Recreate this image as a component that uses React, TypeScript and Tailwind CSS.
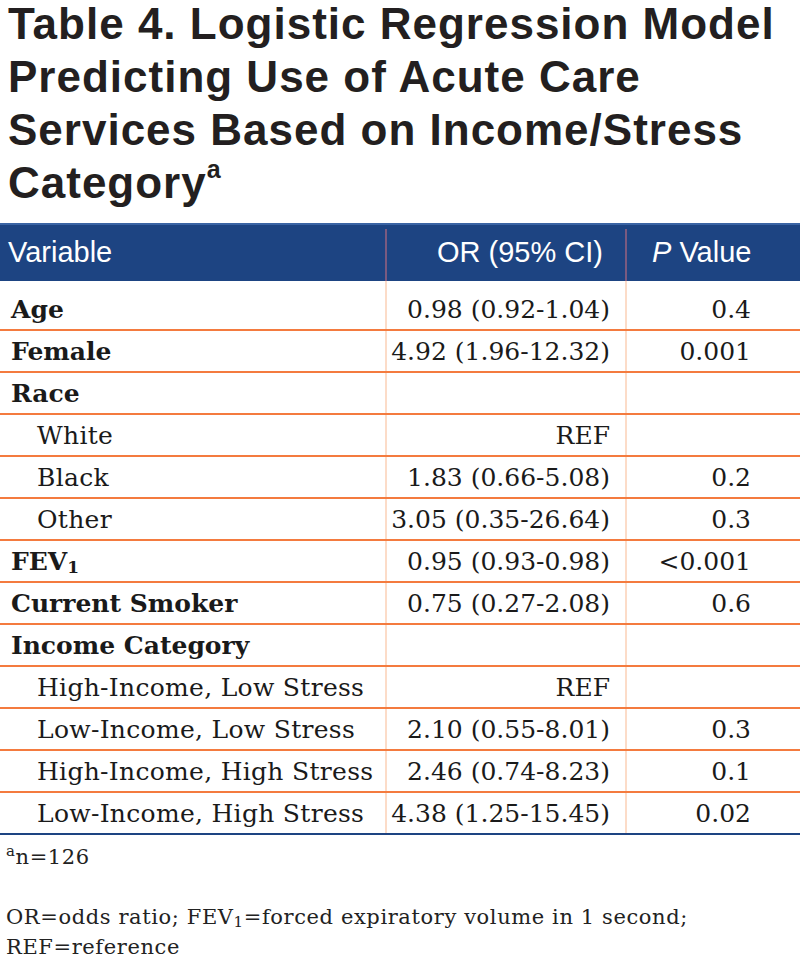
import React from "react";

type Row = {
  label: React.ReactNode;
  or?: string;
  p?: string;
  bold?: boolean;
};

const rows: Row[] = [
  { label: "Age", or: "0.98 (0.92-1.04)", p: "0.4", bold: true },
  { label: "Female", or: "4.92 (1.96-12.32)", p: "0.001", bold: true },
  { label: "Race", bold: true },
  { label: "White", or: "REF" },
  { label: "Black", or: "1.83 (0.66-5.08)", p: "0.2" },
  { label: "Other", or: "3.05 (0.35-26.64)", p: "0.3" },
  {
    label: (
      <span>
        FEV<span className="text-[17px] relative top-[3px]">1</span>
      </span>
    ),
    or: "0.95 (0.93-0.98)",
    p: "<0.001",
    bold: true,
  },
  { label: "Current Smoker", or: "0.75 (0.27-2.08)", p: "0.6", bold: true },
  { label: "Income Category", bold: true },
  { label: "High-Income, Low Stress", or: "REF" },
  { label: "Low-Income, Low Stress", or: "2.10 (0.55-8.01)", p: "0.3" },
  { label: "High-Income, High Stress", or: "2.46 (0.74-8.23)", p: "0.1" },
  { label: "Low-Income, High Stress", or: "4.38 (1.25-15.45)", p: "0.02" },
];

const serif = "font-['DejaVu_Serif',serif]";

const App: React.FC = () => {
  return (
    <div className="w-[800px] h-[960px] bg-white text-[#1a1a1a] overflow-hidden">
      <h1 className="font-['Liberation_Sans',Arial,sans-serif] font-bold text-[44px] leading-[53px] text-[#231f20] pl-[8px] -mt-[3px] tracking-[1px] whitespace-nowrap">
        Table 4. Logistic Regression Model
        <br />
        Predicting Use of Acute Care
        <br />
        Services Based on Income/Stress
        <br />
        Category
        <span className="text-[25px] relative top-[-20px] tracking-normal">a</span>
      </h1>

      <div className="mt-[7px]">
        {/* header */}
        <div className="grid grid-cols-[385px_240px_175px] h-[58px] bg-[#1d4482] border-t-2 border-[#3a64a4] font-['Liberation_Sans',Arial,sans-serif] text-white text-[29px]">
          <div className="flex items-center pl-[8px]">Variable</div>
          <div className="flex items-center justify-end pr-[22px] border-l-2 border-[#7a5a80] mt-[4px]">
            <span className="-mt-[4px]">OR (95% CI)</span>
          </div>
          <div className="flex items-center pl-[25px] border-l-2 border-[#7a5a80] mt-[4px]">
            <span className="-mt-[4px]">
              <i>P</i> Value
            </span>
          </div>
        </div>

        {/* body */}
        <div className={`${serif} text-[25px]`}>
          {rows.map((r, i) => {
            const last = i === rows.length - 1;
            const first = i === 0;
            return (
              <div
                key={i}
                className={`grid grid-cols-[385px_240px_175px] border-b-2 ${
                  last ? "border-[#1d4482]" : "border-[#f47b3f]"
                } ${first ? "h-[50px]" : "h-[42px]"}`}
              >
                <div
                  className={`flex items-end pb-[1px] ${
                    r.bold ? "font-bold pl-[11px]" : "pl-[37px] tracking-[0.3px]"
                  }`}
                >
                  {r.label}
                </div>
                <div className="flex items-end justify-end pb-[1px] pr-[15px] border-l-2 border-[#fcdcc8]">
                  {r.or}
                </div>
                <div className="flex items-end justify-end pb-[1px] pr-[49px] border-l-2 border-[#fcdcc8]">
                  {r.p}
                </div>
              </div>
            );
          })}
        </div>
      </div>

      <div className={`${serif} text-[21px] leading-[28px] tracking-[0.6px] px-[6px] mt-[8px] text-[#222]`}>
        <p>
          <span className="text-[15px] relative top-[-8px]">a</span>n=126
        </p>
        <p className="mt-[30px]">
          OR=odds ratio; FEV<span className="text-[15px] relative top-[3px]">1</span>=forced expiratory volume in 1 second;
          <br />
          REF=reference
        </p>
      </div>
    </div>
  );
};

export default App;
